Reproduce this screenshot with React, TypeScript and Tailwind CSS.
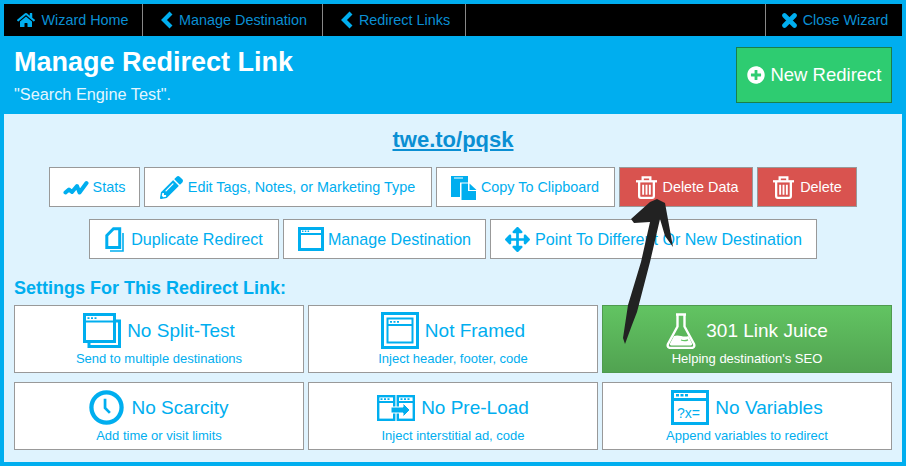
import type { ReactNode } from "react"
import { FaArrowsAlt, FaHome, FaPencilAlt, FaPlusCircle } from "react-icons/fa"

function ChevronIcon() {
    return (
        <svg viewBox="0 0 13 18" className="h-[18px] w-[13px]" fill="none" stroke="#00aeef" strokeWidth="4.200">
            <path d="M11 2L4 9l7 7" />
        </svg>
    )
}

function CloseIcon() {
    return (
        <svg viewBox="0 0 15 15" className="h-[15px] w-[15px]" fill="none" stroke="#00aeef" strokeWidth="4.600" strokeLinecap="round">
            <path d="M2.500 2.500l10 10M12.500 2.500l-10 10" />
        </svg>
    )
}

function WindowIcon() {
    return (
        <svg viewBox="0 0 26 24" className="h-[24px] w-[26px]" fill="none" stroke="#00aeef">
            <rect x="1.500" y="1.500" width="23" height="21" strokeWidth="3" fill="#fff" />
            <path d="M1 7h24" strokeWidth="2" />
            <path d="M4 4.300h1.500M6.800 4.300h1.500M9.600 4.300h1.500" strokeWidth="1.500" />
        </svg>
    )
}

function SplitIcon() {
    return (
        <svg viewBox="0 0 38 35" className="h-[35px] w-[38px]" fill="none" stroke="#00aeef">
            <path d="M6 8h30.500v25.500H6z" strokeWidth="3" fill="#fff" />
            <rect x="1.500" y="1.500" width="30" height="27" strokeWidth="3" fill="#fff" />
            <path d="M1 8.500h31" strokeWidth="2" />
            <path d="M4.500 5.200h2M8 5.200h2M11.500 5.200h2" strokeWidth="1.800" />
        </svg>
    )
}

function FramedIcon() {
    return (
        <svg viewBox="0 0 38 37" className="h-[37px] w-[38px]" fill="none" stroke="#00aeef">
            <rect x="1.500" y="1.500" width="35" height="34" strokeWidth="3" fill="#fff" />
            <rect x="6.500" y="6.500" width="25" height="24" strokeWidth="2" />
            <path d="M6 13h26" strokeWidth="2" />
            <path d="M9 9.800h2M12.500 9.800h2M16 9.800h2" strokeWidth="1.800" />
        </svg>
    )
}

function PreLoadIcon() {
    return (
        <svg viewBox="0 0 38 26" className="h-[26px] w-[38px]" fill="none" stroke="#00aeef">
            <rect x="1.200" y="1.200" width="16" height="23.600" strokeWidth="2.400" />
            <rect x="20.800" y="1.200" width="16" height="23.600" strokeWidth="2.400" />
            <path d="M1 7h16M21 7h16" strokeWidth="2" />
            <path d="M3.500 4.200h2M7 4.200h2M10.500 4.200h2M23.500 4.200h2M27 4.200h2M30.500 4.200h2" strokeWidth="1.700" />
            <path d="M14 12h12V8l7 7-7 7v-4H14z" fill="#00aeef" stroke="#fff" strokeWidth="1" />
        </svg>
    )
}

function VariablesIcon() {
    return (
        <svg viewBox="0 0 38 35" className="h-[35px] w-[38px]" fill="none" stroke="#00aeef">
            <rect x="1.500" y="1.500" width="35" height="32" strokeWidth="3" fill="#fff" />
            <path d="M1 9.500h36" strokeWidth="3" />
            <path d="M5 5.300h3M9.500 5.300h3M14 5.300h3" strokeWidth="2.600" />
            <text x="6" y="27.500" fontSize="14" fill="#00aeef" stroke="none" fontFamily="'Liberation Sans', sans-serif">?x=</text>
        </svg>
    )
}

function ClockIcon() {
    return (
        <svg viewBox="0 0 36 36" className="h-[35px] w-[35px]" fill="none" stroke="#00aeef">
            <circle cx="18" cy="18" r="15.500" strokeWidth="4.400" />
            <path d="M16.500 9v9.500l5 5" strokeWidth="2.800" />
        </svg>
    )
}

function FlaskIcon() {
    return (
        <svg viewBox="0 0 30 36" className="h-[36px] w-[30px]" fill="none" stroke="#fff">
            <path d="M10 1.500h10M11.500 2v11.500L2 31c-1 2.500.5 4 3 4h20c2.500 0 4-1.500 3-4l-9.500-17.500V2" strokeWidth="2.400" />
            <path d="M8 23c5-2 9 2 14.500 0l3.500 7.500c.3 1.200-.3 2-1.300 2H5.300c-1 0-1.600-.8-1.300-2z" fill="#fff" stroke="none" />
            <path d="M15 27c3 1 5 .7 7-.2" stroke="#62c462" strokeWidth="1.300" />
        </svg>
    )
}

function StatsIcon() {
    return (
        <svg viewBox="0 0 26 15" className="h-[15px] w-[26px]" fill="none" stroke="#00aeef" strokeWidth="4" strokeLinejoin="round" strokeLinecap="round">
            <path d="M2.500 12.500l3.500-3 3 2.500 5-6 2.500 6.500L23.500 3" />
        </svg>
    )
}

function CopyIcon() {
    return (
        <svg viewBox="0 0 26 25" className="h-[25px] w-[26px]">
            <path d="M0 1h17v6.500H9V22H0z" fill="#00aeef" />
            <path d="M3 3h9" stroke="#fff" strokeWidth="1" />
            <path d="M10.500 8.500h6.500v7.500h8V25H10.500z" fill="#00aeef" />
            <path d="M18.500 8.500l7 6.500h-7z" fill="#00aeef" />
        </svg>
    )
}

function DuplicateIcon() {
    return (
        <svg viewBox="0 0 19 25" className="h-[25px] w-[19px]" fill="none" stroke="#00aeef">
            <path d="M1.800 8.500l6.700-6.700h6.200v18.700H1.800z" strokeWidth="3" />
            <path d="M18 6v18H5" strokeWidth="1.600" />
        </svg>
    )
}

function TrashIcon() {
    return (
        <svg viewBox="0 0 22 24" className="h-[23px] w-[21px]" fill="none" stroke="#fff">
            <path d="M0 5.500h22" strokeWidth="2.400" />
            <path d="M7 5V1.500h8V5" strokeWidth="2.400" />
            <path d="M3.300 6v15c0 1 .7 1.800 1.800 1.800h11.800c1.100 0 1.800-.8 1.800-1.800V6" strokeWidth="2.400" />
            <path d="M7.500 9v10.500M11 9v10.500M14.500 9v10.500" strokeWidth="2" />
        </svg>
    )
}

function NavItem({ icon, label, className }: { icon: ReactNode; label: string; className: string }) {
    return (
        <div className={`flex items-center justify-center gap-[6px] border-[#888] text-[14.4px] text-[#0a8fd3] ${className}`}>
            {icon}
            <span className="pt-[2px]">{label}</span>
        </div>
    )
}

function ActionButton({ icon, label, className, gap = "gap-[6px]", labelClass = "pt-px" }: { icon: ReactNode; label: string; className: string; gap?: string; labelClass?: string }) {
    return (
        <div className={`flex h-10 items-center justify-center border border-[#999] ${gap} ${className}`}>
            {icon}
            <span className={labelClass}>{label}</span>
        </div>
    )
}

function SettingCard({ icon, title, sub, active, gap = "gap-[6px]" }: { icon: ReactNode; title: string; sub: string; active?: boolean; gap?: string }) {
    return (
        <div
            className={`flex h-[68px] flex-col items-center border ${active
                ? "border-[#4f9a4f] bg-gradient-to-b from-[#62c462] to-[#51a351] text-white"
                : "border-[#999] bg-white text-[#00aeef]"
                }`}
        >
            <div className={`flex h-[45px] items-center pt-1 text-[19px] leading-none ${gap}`}>
                {icon}
                <span>{title}</span>
            </div>
            <div className="text-[13px] leading-4">{sub}</div>
        </div>
    )
}

export default function App() {
    return (
        <div className="relative h-[466px] w-[906px] overflow-hidden bg-[#00aeef] p-1 font-['Liberation_Sans',Arial,sans-serif]">
            {/* Wizard nav */}
            <nav className="flex h-8 bg-black">
                <NavItem icon={<FaHome className="h-4 w-[18px] text-[#00aeef]" />} label="Wizard Home" className="w-[139px] border-r" />
                <NavItem icon={<ChevronIcon />} label="Manage Destination" className="w-[180px] border-r pl-[2px]" />
                <NavItem icon={<ChevronIcon />} label="Redirect Links" className="w-[143px] border-r pl-[2px]" />
                <div className="flex-1" />
                <NavItem icon={<CloseIcon />} label="Close Wizard" className="w-[137px] border-l pl-[2px]" />
            </nav>

            {/* Header */}
            <header className="flex h-[78px] items-start justify-between px-[10px] pt-[11px]">
                <div>
                    <h1 className="text-[27px] leading-[30px] font-bold text-white">Manage Redirect Link</h1>
                    <p className="mt-[7px] text-[16.3px] leading-5 text-[#e4f6fe]">"Search Engine Test".</p>
                </div>
                <button className="flex h-14 w-[156px] items-center justify-center gap-[5px] border border-[#1a7f4b] bg-[#2ecc71] pl-px text-[18.5px] text-white">
                    <FaPlusCircle className="h-[18px] w-[18px]" />
                    New Redirect
                </button>
            </header>

            {/* Panel */}
            <main className="h-[348px] bg-[#dff3fe] px-[10px]">
                <div className="pt-[12px] text-center text-[22px] leading-7 font-bold text-[#0a8fd3] underline">twe.to/pqsk</div>

                <div className="mt-[13px] flex justify-center gap-1 pr-[1px] text-[14.4px] text-[#00aeef]">
                    <ActionButton icon={<StatsIcon />} label="Stats" className="w-[91px] bg-white" gap="gap-[4px]" labelClass="pt-[2px]" />
                    <ActionButton icon={<FaPencilAlt className="h-[23px] w-[23px]" />} label="Edit Tags, Notes, or Marketing Type" className="w-[288px] bg-white" gap="gap-[5px]" labelClass="pt-[2px]" />
                    <ActionButton icon={<CopyIcon />} label="Copy To Clipboard" className="w-[179px] bg-white" gap="gap-[4px]" labelClass="pt-[2px]" />
                    <ActionButton icon={<TrashIcon />} label="Delete Data" className="w-[134px] bg-[#d9534f] pl-[3px] text-white" labelClass="pt-[2px]" />
                    <ActionButton icon={<TrashIcon />} label="Delete" className="w-[100px] bg-[#d9534f] pl-[2px] text-white" labelClass="pt-[2px]" />
                </div>

                <div className="mt-3 flex justify-center gap-1 text-[16.1px] text-[#00aeef]">
                    <ActionButton icon={<DuplicateIcon />} label="Duplicate Redirect" className="w-[190px] bg-white" gap="gap-[7px]" />
                    <ActionButton icon={<WindowIcon />} label="Manage Destination" className="w-[203px] bg-white" gap="gap-[4px]" />
                    <ActionButton icon={<FaArrowsAlt className="h-[25px] w-[25px]" />} label="Point To Different Or New Destination" className="w-[327px] bg-white" gap="gap-[5px]" />
                </div>

                <h2 className="mt-[19px] text-lg leading-[20px] font-bold text-[#00aeef]">Settings For This Redirect Link:</h2>

                <div className="mt-[7px] grid grid-cols-3 gap-x-1 gap-y-[9px]">
                    <SettingCard icon={<SplitIcon />} title="No Split-Test" sub="Send to multiple destinations" />
                    <SettingCard icon={<FramedIcon />} title="Not Framed" sub="Inject header, footer, code" />
                    <SettingCard icon={<FlaskIcon />} title="301 Link Juice" sub="Helping destination's SEO" active gap="gap-[10px]" />
                    <SettingCard icon={<ClockIcon />} title="No Scarcity" sub="Add time or visit limits" gap="gap-[7px]" />
                    <SettingCard icon={<PreLoadIcon />} title="No Pre-Load" sub="Inject interstitial ad, code" />
                    <SettingCard icon={<VariablesIcon />} title="No Variables" sub="Append variables to redirect" />
                </div>
            </main>

            {/* Hand drawn arrow */}
            <svg className="absolute top-0 left-0 h-[466px] w-[906px]" viewBox="0 0 906 466" fill="#222">
                <path d="M657 199 L665 203 L673 247 L665 236 L660 219 L650 262 L637 312 L632 325 L625 344 L623 338 L628 305 L641 262 L650 222 L634 223 L631 219 L650 202 Z" />
            </svg>
        </div>
    )
}
